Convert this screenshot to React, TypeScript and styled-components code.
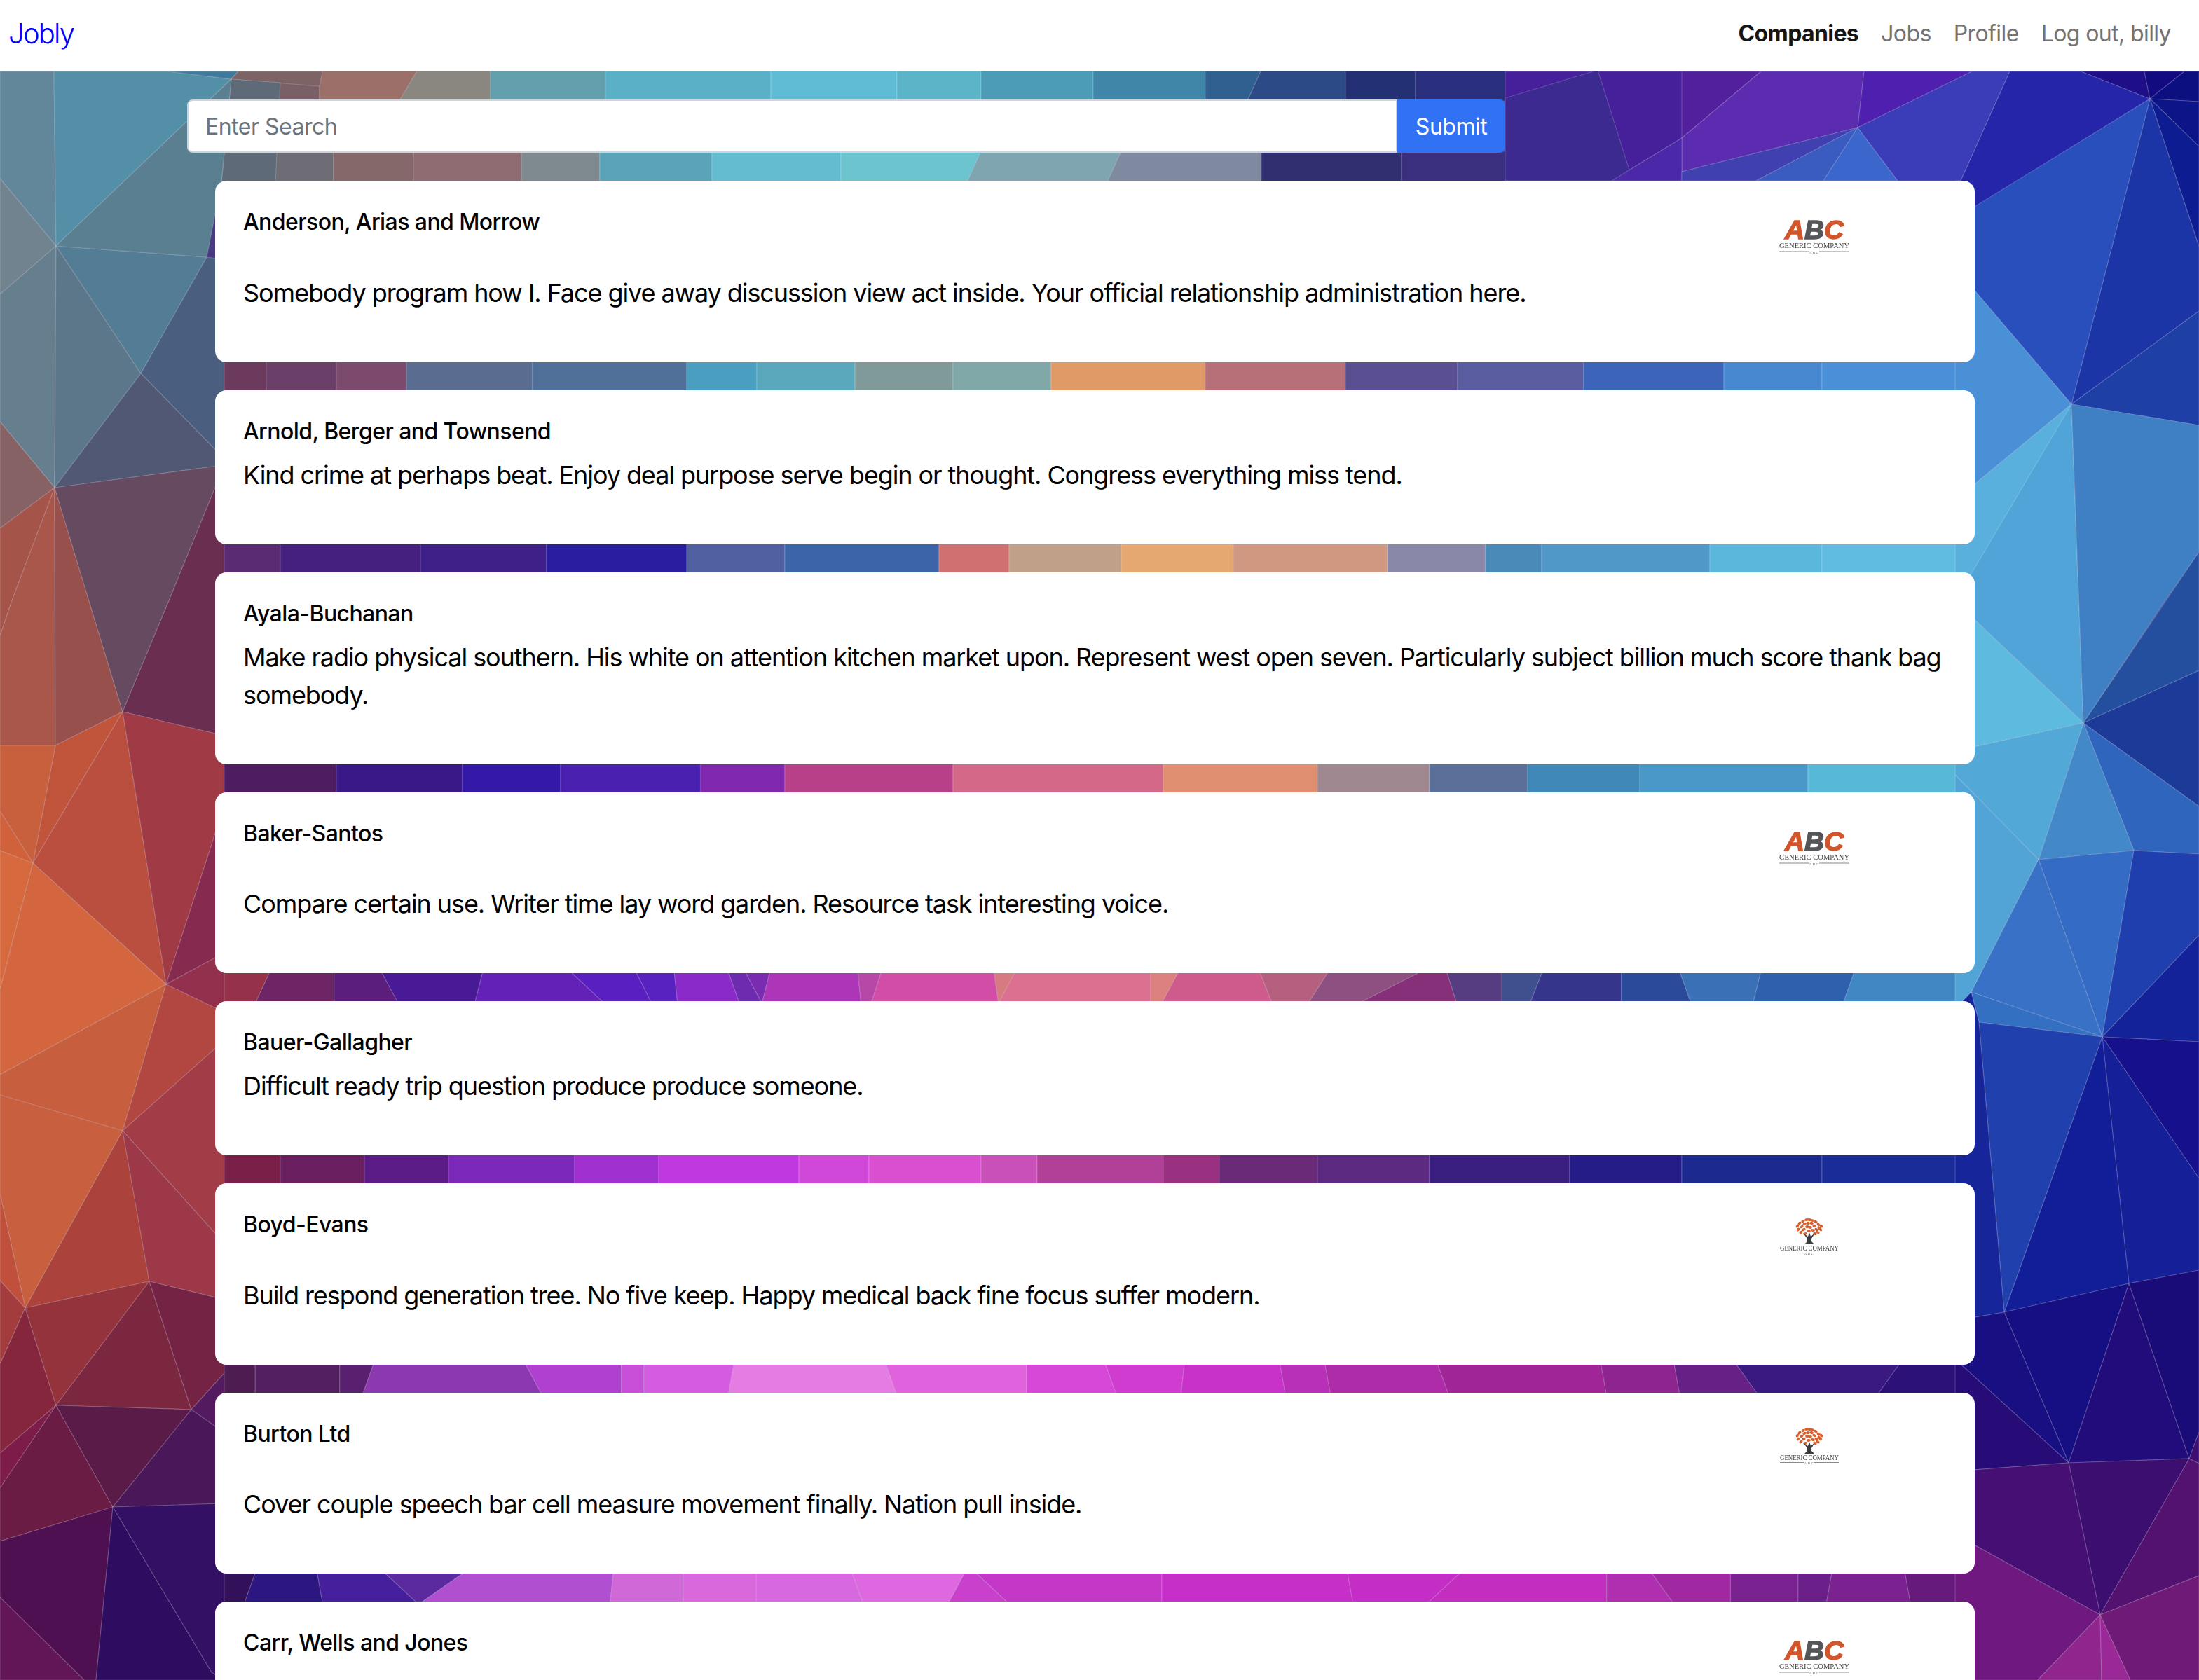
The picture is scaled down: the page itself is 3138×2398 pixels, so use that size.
import styled, { createGlobalStyle } from "styled-components";

const GlobalStyle = createGlobalStyle`
  html, body {
    margin: 0;
    padding: 0;
    background: #fff;
    font-family: Inter, "Noto Sans", "Liberation Sans", sans-serif;
  }
`;

const Page = styled.div`
  position: relative;
  width: 3138px;
  height: 2398px;
  overflow: hidden;
`;

const Backdrop = styled.svg`
  position: absolute;
  top: 102px;
  left: 0;
  width: 3138px;
  height: 2296px;
`;

const Navbar = styled.nav`
  position: relative;
  display: flex;
  align-items: center;
  justify-content: space-between;
  box-sizing: border-box;
  height: 102px;
  padding: 0 24px 8px 12px;
  background: #fff;
`;

const Brand = styled.a`
  color: #0000ff;
  font-size: 40px;
  font-weight: 300;
  letter-spacing: -1.8px;
`;

const NavLinks = styled.div`
  display: flex;
`;

const NavLink = styled.a<{ $active?: boolean }>`
  padding: 0 16px;
  font-size: 32px;
  letter-spacing: -0.6px;
  font-weight: ${(p) => (p.$active ? 700 : 400)};
  color: ${(p) => (p.$active ? "#141414" : "#737373")};
`;

const Content = styled.main`
  position: relative;
  padding: 40px 0 0 267px;
`;

const SearchForm = styled.form`
  display: flex;
  width: 1881px;
  height: 76px;
  margin-bottom: 40px;
`;

const SearchInput = styled.input`
  flex: 1;
  box-sizing: border-box;
  min-width: 0;
  padding: 0 24px;
  border: 2px solid #ced4da;
  border-radius: 8px 0 0 8px;
  background: #fff;
  font: inherit;
  font-size: 32px;
  letter-spacing: -0.5px;
  &::placeholder {
    color: #6c757d;
    opacity: 1;
  }
`;

const SubmitButton = styled.button`
  width: 154px;
  border: 0;
  border-radius: 0 8px 8px 0;
  background: #3072f3;
  color: #fff;
  font: inherit;
  font-size: 32px;
  letter-spacing: -0.5px;
`;

const CardList = styled.div`
  display: flex;
  flex-direction: column;
  gap: 40px;
  width: 2511px;
  margin-left: 40px;
`;

const Card = styled.article`
  box-sizing: border-box;
  padding: 40px;
  border-radius: 16px;
  background: #fff;
  color: #000;
`;

const CardHeader = styled.div<{ $withLogo: boolean }>`
  display: flex;
  justify-content: space-between;
  height: ${(p) => (p.$withLogo ? "76.5px" : "38px")};
  margin-bottom: 16px;
`;

const CardTitle = styled.h6`
  margin: 0;
  font-size: 32px;
  font-weight: 500;
  line-height: 38px;
  letter-spacing: -0.58px;
`;

const CardText = styled.p`
  margin: 0 0 32px;
  font-size: 36px;
  line-height: 54px;
  letter-spacing: -1.08px;
`;

const LogoArt = styled.svg`
  flex: none;
  width: 240px;
  height: 76px;
  filter: blur(0.5px);
`;

const LogoCaption = ({ x, y, width, gap }: { x: number; y: number; width: number; gap: number }) => (
  <>
    <text
      x={x}
      y={y}
      textAnchor="middle"
      textLength={width}
      lengthAdjust="spacingAndGlyphs"
      fontFamily="'Liberation Serif', serif"
      fontSize="9.5"
      fill="#3f3f3f"
    >
      GENERIC COMPANY
    </text>
    <rect x={x - width / 2} y={y + gap} width={width / 2 - 7} height="1" fill="#8a8a8a" />
    <rect x={x + 7} y={y + gap} width={width / 2 - 7} height="1" fill="#8a8a8a" />
    <text x={x} y={y + gap + 3} textAnchor="middle" fontFamily="'Liberation Serif', serif" fontSize="5" letterSpacing="1.5" fill="#555">
      ABC
    </text>
  </>
);

const AbcLogo = () => (
  <LogoArt viewBox="0 0 240 76">
    <text
      x="9"
      y="43"
      textLength="84"
      lengthAdjust="spacingAndGlyphs"
      fontFamily="'Liberation Sans', sans-serif"
      fontWeight="700"
      fontStyle="italic"
      fontSize="36"
      strokeWidth="1.4"
    >
      <tspan fill="#d2562b" stroke="#d2562b">A</tspan>
      <tspan fill="#55565a" stroke="#55565a">B</tspan>
      <tspan fill="#d2562b" stroke="#d2562b">C</tspan>
    </text>
    <LogoCaption x={51} y={56} width={100} gap={4.5} />
  </LogoArt>
);

const LEAVES: [number, number][] = [
  [27, 21], [28, 26], [30, 17], [32, 30], [33, 22], [35, 14], [36, 26], [37, 18], [38, 32], [40, 12],
  [41, 22], [42, 17], [43, 28], [44, 12], [45, 23], [47, 17], [48, 13], [49, 27], [51, 21], [52, 32],
  [53, 15], [54, 26], [56, 30], [57, 19], [58, 24], [60, 26], [61, 21],
];

const TreeLogo = () => (
  <LogoArt viewBox="0 0 240 76">
    {LEAVES.map(([cx, cy]) => (
      <ellipse key={`${cx}-${cy}`} cx={cx} cy={cy} rx="2.8" ry="1.9" fill="#d8602e" transform={`rotate(${(cx - 44) * 3} ${cx} ${cy})`} />
    ))}
    <path d="M35 31 L42 36 L44 30 L46 36 L52 31 L47 39 L47 43 L51 47 L37 47 L41 43 L41 39 Z" fill="#3c3c3e" />
    <LogoCaption x={44} y={56} width={84} gap={3} />
  </LogoArt>
);

type Company = { name: string; text?: string; logo?: "abc" | "tree" };

const COMPANIES: Company[] = [
  { name: "Anderson, Arias and Morrow", logo: "abc", text: "Somebody program how I. Face give away discussion view act inside. Your official relationship administration here." },
  { name: "Arnold, Berger and Townsend", text: "Kind crime at perhaps beat. Enjoy deal purpose serve begin or thought. Congress everything miss tend." },
  { name: "Ayala-Buchanan", text: "Make radio physical southern. His white on attention kitchen market upon. Represent west open seven. Particularly subject billion much score thank bag somebody." },
  { name: "Baker-Santos", logo: "abc", text: "Compare certain use. Writer time lay word garden. Resource task interesting voice." },
  { name: "Bauer-Gallagher", text: "Difficult ready trip question produce produce someone." },
  { name: "Boyd-Evans", logo: "tree", text: "Build respond generation tree. No five keep. Happy medical back fine focus suffer modern." },
  { name: "Burton Ltd", logo: "tree", text: "Cover couple speech bar cell measure movement finally. Nation pull inside." },
  { name: "Carr, Wells and Jones", logo: "abc" },
];

// strips of the wallpaper that show between the cards: [top x, bottom x, colour], left to right
type Band = { y0: number; y1: number; x0: number; k: number; from: number; segs: [number, number, string][] };

const BANDS: Band[] = [
  { y0: 100, y1: 144, x0: 0, k: 2, from: 150, segs: [
    [228, 228, "#7a6066"], [298, 285, "#9a7068"], [350, 350, "#8a8680"], [432, 432, "#62a0ae"], [550, 550, "#5ab0c6"],
    [640, 640, "#60bcd4"], [700, 700, "#5cb4c8"], [780, 780, "#4c9cb8"], [860, 860, "#3f86a8"], [900, 890, "#30608f"],
    [960, 960, "#2b4a86"], [1010, 1010, "#243074"], [1074, 1074, "#2a2f7e"],
  ] },
  { y0: 216, y1: 260, x0: 0, k: 2, from: 150, segs: [
    [196, 196, "#5e6a78"], [238, 238, "#6e6c74"], [295, 295, "#85686a"], [372, 372, "#8e6c72"], [428, 428, "#7f8a90"],
    [508, 508, "#5aa3b8"], [600, 600, "#64bcd0"], [700, 690, "#6cc4d0"], [800, 790, "#7fa5b0"], [900, 900, "#7f8aa0"],
    [1000, 1000, "#303070"], [1074, 1074, "#3b2f80"],
  ] },
  { y0: 514, y1: 560, x0: 0, k: 2, from: 150, segs: [
    [190, 190, "#6b3a5c"], [240, 240, "#6a3f68"], [290, 290, "#7c4a6c"], [380, 380, "#5a6c90"], [490, 490, "#50709a"],
    [540, 540, "#4a9ec0"], [610, 610, "#5aa8bc"], [680, 680, "#7f9a98"], [750, 750, "#80a8a8"], [860, 860, "#e09a68"],
    [960, 960, "#b87078"], [1040, 1040, "#5a4f90"], [1130, 1130, "#5a5ea0"], [1230, 1230, "#3c64b8"], [1300, 1300, "#4888d0"], [1420, 1420, "#4a90d8"],
  ] },
  { y0: 774, y1: 818, x0: 0, k: 2, from: 150, segs: [
    [200, 200, "#5a2a72"], [300, 300, "#46207e"], [390, 390, "#3e2088"], [490, 490, "#2a1ea0"], [560, 560, "#5060a0"],
    [670, 670, "#3c64a8"], [720, 720, "#d07070"], [800, 800, "#c0a088"], [880, 880, "#e4a870"], [990, 990, "#d09880"],
    [1060, 1060, "#8a88a8"], [1100, 1100, "#4a8ab8"], [1220, 1220, "#5098c8"], [1300, 1300, "#5ab8dc"], [1420, 1420, "#60bce0"],
  ] },
  { y0: 1089, y1: 1134, x0: 0, k: 2, from: 150, segs: [
    [240, 240, "#4e1c60"], [330, 330, "#3a1888"], [400, 400, "#3418a8"], [500, 500, "#4a20b0"], [560, 560, "#8028b0"],
    [680, 680, "#b84088"], [830, 830, "#d46888"], [940, 940, "#e09070"], [1020, 1020, "#a08890"], [1090, 1090, "#5a7098"],
    [1170, 1170, "#4088b8"], [1290, 1290, "#4a98c8"], [1420, 1420, "#58b8d8"],
  ] },
  { y0: 1387, y1: 1432, x0: 300, k: 1.607, from: 0, segs: [
    [53, 40, "#95324a"], [110, 110, "#6e2565"], [152, 167, "#5b1e7c"], [242, 235, "#481a96"], [320, 350, "#6421b8"],
    [378, 392, "#5a1fc0"], [412, 415, "#5722bf"], [460, 470, "#8a2ac8"], [475, 490, "#6d2cb0"], [497, 490, "#7a2cb0"],
    [575, 578, "#ac35b8"], [596, 587, "#b848a8"], [696, 700, "#d24da6"], [715, 700, "#d87b80"], [835, 835, "#dc7090"],
    [860, 845, "#dc8080"], [932, 943, "#cf5a8c"], [993, 975, "#b5607e"], [1075, 1020, "#8e5080"], [1098, 1107, "#853078"],
    [1147, 1147, "#563c80"], [1183, 1172, "#40508e"], [1253, 1253, "#36358c"], [1305, 1315, "#2c4a9a"], [1377, 1370, "#3a70b5"],
    [1460, 1450, "#2d60ad"], [1590, 1590, "#4088c4"],
  ] },
  { y0: 1648, y1: 1692, x0: 0, k: 2, from: 150, segs: [
    [200, 200, "#7a2048"], [260, 260, "#6a2060"], [320, 320, "#5c1c88"], [410, 410, "#7c28b8"], [470, 470, "#a030d0"],
    [570, 570, "#c038e0"], [620, 620, "#d048d8"], [700, 700, "#d850d0"], [740, 740, "#c850b8"], [830, 830, "#b04098"],
    [870, 870, "#9a3080"], [940, 940, "#6a2a78"], [1020, 1020, "#5c2a80"], [1120, 1120, "#3a1e80"], [1200, 1200, "#261c88"],
    [1300, 1300, "#1c2a90"], [1420, 1420, "#1a2c98"],
  ] },
  { y0: 1947, y1: 1992, x0: 300, k: 1.607, from: 0, segs: [
    [40, 40, "#4e1c50"], [115, 115, "#541f60"], [145, 135, "#5a2070"], [280, 295, "#8c38b0"], [365, 365, "#b040d0"],
    [385, 385, "#c850d8"], [465, 460, "#d45ce0"], [600, 610, "#e47ce4"], [725, 725, "#e062dc"], [795, 805, "#d848d8"],
    [865, 862, "#d03cd0"], [950, 955, "#c832c8"], [990, 995, "#b82fb8"], [1090, 1100, "#ae2ca8"], [1235, 1240, "#a02698"],
    [1300, 1305, "#8e2490"], [1355, 1375, "#662086"], [1500, 1480, "#3a1a80"], [1590, 1590, "#2c1278"],
  ] },
  { y0: 2245, y1: 2290, x0: 300, k: 1.607, from: 0, segs: [
    [40, 30, "#33105a"], [95, 100, "#2c1680"], [155, 185, "#46209c"], [225, 185, "#5a2a9e"], [358, 355, "#b050d0"],
    [420, 420, "#d068d8"], [485, 485, "#d868dc"], [570, 580, "#d868e0"], [670, 655, "#de68e0"], [680, 710, "#c840cc"],
    [845, 845, "#c438c8"], [1010, 1015, "#c62fc8"], [1110, 1080, "#c42ec6"], [1240, 1240, "#c42ec0"], [1280, 1300, "#b02eb0"],
    [1350, 1350, "#a028a0"], [1410, 1410, "#7a2290"], [1440, 1435, "#6a2088"], [1505, 1510, "#7c2290"], [1590, 1590, "#651a7c"],
  ] },
];

const FACETS: [string, number[]][] = [
  // right of the search button
  ["#46209a", [2148, 102, 2513, 102, 2400, 197, 2300, 258, 2148, 258]],
  ["#3c2a90", [2148, 140, 2280, 100, 2330, 258, 2148, 258]],
  ["#52209c", [2400, 102, 2513, 102, 2400, 197]],
  ["#5b2cb0", [2513, 102, 2660, 102, 2651, 182, 2400, 245, 2400, 197]],
  ["#4f20b0", [2660, 102, 2814, 102, 2651, 182]],
  ["#4a28a8", [2300, 258, 2400, 197, 2400, 258]],
  ["#4040b0", [2400, 245, 2651, 182, 2506, 258, 2400, 258]],
  ["#3a5cc0", [2506, 258, 2651, 182, 2602, 258]],
  ["#3b66cc", [2602, 258, 2651, 182, 2708, 258]],
  ["#3a3cb8", [2651, 182, 2814, 102, 2868, 102, 2798, 258, 2708, 258]],

  // left edge
  ["#62879a", [0, 102, 77, 102, 80, 351, 0, 255]],
  ["#538fa6", [77, 102, 240, 102, 330, 113, 80, 351]],
  ["#3f7a9c", [240, 102, 340, 102, 330, 113]],
  ["#7d6266", [330, 113, 340, 102, 460, 102, 456, 123]],
  ["#5e6a78", [330, 113, 400, 118, 393, 260, 316, 260]],
  ["#70838e", [0, 255, 80, 351, 0, 420]],
  ["#667f8e", [0, 420, 80, 351, 78, 696, 0, 602]],
  ["#5b7789", [80, 351, 201, 533, 78, 696]],
  ["#537d95", [80, 351, 295, 367, 201, 533]],
  ["#5a7f90", [80, 351, 330, 113, 316, 260, 295, 367]],
  ["#4a5f7f", [295, 367, 320, 370, 320, 655, 201, 533]],
  ["#515874", [201, 533, 320, 655, 320, 664, 78, 696]],
  ["#866265", [0, 602, 78, 696, 0, 754]],
  ["#a5544a", [0, 754, 78, 696, 16, 860, 0, 908]],
  ["#a8574a", [78, 696, 79, 1064, 0, 1064, 0, 908, 16, 860]],
  ["#98504c", [78, 696, 175, 1016, 79, 1064]],
  ["#664a60", [78, 696, 320, 664, 240, 860, 175, 1016]],
  ["#6a2e50", [320, 664, 320, 1050, 175, 1016, 240, 860]],
  ["#c1553c", [79, 1064, 175, 1016, 47, 1232]],
  ["#c85f3d", [0, 1064, 79, 1064, 47, 1232, 0, 1158]],
  ["#d0613a", [0, 1158, 47, 1232, 0, 1214]],
  ["#d66a3e", [0, 1214, 47, 1232, 0, 1413]],
  ["#bb4f3f", [47, 1232, 175, 1016, 237, 1405]],
  ["#d3663e", [47, 1232, 237, 1405, 0, 1534, 0, 1413]],
  ["#a03a45", [175, 1016, 320, 1050, 320, 1150, 237, 1405]],
  ["#862a50", [320, 1150, 320, 1360, 237, 1405]],
  ["#93304d", [237, 1405, 320, 1360, 320, 1445]],
  ["#c75e3e", [0, 1534, 237, 1405, 175, 1614, 0, 1563]],
  ["#b24640", [237, 1405, 320, 1445, 320, 1485, 175, 1614]],
  ["#a23c46", [175, 1614, 320, 1485, 320, 1775]],
  ["#c85f3e", [0, 1563, 175, 1614, 36, 1867, 0, 1704]],
  ["#c0503c", [0, 1704, 36, 1867, 0, 1828]],
  ["#a33d3d", [0, 1828, 36, 1867, 0, 1947]],
  ["#ab423c", [175, 1614, 213, 1829, 36, 1867]],
  ["#9c3847", [175, 1614, 320, 1775, 320, 1855, 213, 1829]],
  ["#85263d", [0, 1947, 36, 1867, 80, 2006, 0, 2074]],
  ["#95333c", [36, 1867, 213, 1829, 80, 2006]],
  ["#7c2740", [213, 1829, 273, 2012, 80, 2006]],
  ["#752345", [213, 1829, 320, 1855, 320, 1960, 273, 2012]],
  ["#7d1c48", [0, 2074, 80, 2006, 0, 2124]],
  ["#6a1c45", [0, 2124, 80, 2006, 161, 2151, 0, 2200]],
  ["#5a1b48", [80, 2006, 273, 2012, 161, 2151]],
  ["#531a60", [273, 2012, 320, 1960, 320, 2045]],
  ["#4a1858", [273, 2012, 320, 2045, 320, 2146, 161, 2151]],
  ["#4e1050", [0, 2200, 161, 2151, 137, 2398, 120, 2398, 0, 2280]],
  ["#621658", [0, 2280, 120, 2398, 0, 2398]],
  ["#2e0c60", [161, 2151, 302, 2387, 320, 2398, 137, 2398]],
  ["#341064", [161, 2151, 320, 2146, 320, 2398, 302, 2387]],

  // right edge
  ["#2525aa", [2868, 102, 2970, 102, 3068, 141, 2780, 320, 2790, 258, 2798, 258]],
  ["#1e0e88", [2970, 102, 3060, 102, 3068, 141]],
  ["#120a80", [3060, 102, 3117, 102, 3068, 141]],
  ["#0c0f80", [3117, 102, 3138, 102, 3138, 145, 3068, 141]],
  ["#0c1588", [3068, 141, 3138, 145, 3138, 209]],
  ["#0e1c92", [3068, 141, 3138, 209, 3138, 352]],
  ["#1c35a6", [3068, 141, 3138, 352, 3138, 444, 2956, 577]],
  ["#1e3fa6", [2956, 577, 3138, 444, 3138, 607]],
  ["#284fbc", [3068, 141, 2790, 312, 2790, 382, 2956, 577]],
  ["#4a90d6", [2790, 382, 2956, 577, 2790, 714]],
  ["#5ab0dc", [2956, 577, 2790, 714, 2790, 858, 2819, 860]],
  ["#50a4d8", [2956, 577, 2790, 858, 2973, 1032]],
  ["#3f80c5", [2956, 577, 2973, 1032, 3088, 860, 3138, 788, 3138, 607]],
  ["#234f9e", [2973, 1032, 3138, 788, 3138, 957]],
  ["#1c3a98", [2973, 1032, 3138, 957, 3138, 1151]],
  ["#3065bd", [2973, 1032, 3138, 1151, 3138, 1219, 3045, 1214]],
  ["#4389ca", [2973, 1032, 3045, 1214, 2909, 1227]],
  ["#5cbbde", [2973, 1032, 2790, 858, 2790, 1072]],
  ["#52a8d6", [2973, 1032, 2790, 1072, 2790, 1106, 2909, 1227]],
  ["#52a4d6", [2909, 1227, 2790, 1106, 2790, 1440, 2813, 1416]],
  ["#346bc4", [3045, 1214, 2909, 1227, 3000, 1480]],
  ["#3871c5", [2909, 1227, 2813, 1416, 3000, 1480]],
  ["#1f3fae", [3045, 1214, 3138, 1219, 3138, 1335, 3000, 1480]],
  ["#14229a", [3000, 1480, 3138, 1335, 3138, 1487]],
  ["#16108c", [3000, 1480, 3138, 1487, 3138, 1682]],
  ["#141f98", [3000, 1480, 3138, 1682, 3138, 1813, 3038, 1832]],
  ["#121e98", [3000, 1480, 3038, 1832, 2860, 1873]],
  ["#3470c2", [2813, 1416, 3000, 1480, 2824, 1459]],
  ["#2040ae", [2824, 1459, 3000, 1480, 2860, 1873]],
  ["#16269a", [2790, 1440, 2813, 1416, 2824, 1459, 2860, 1873, 2790, 1885]],
  ["#160f84", [2860, 1873, 3038, 1832, 2952, 2088]],
  ["#220c7c", [3038, 1832, 3124, 2082, 2952, 2088]],
  ["#1a0c78", [3038, 1832, 3138, 1813, 3138, 2044, 3124, 2082]],
  ["#3e0f70", [3124, 2082, 3138, 2044, 3138, 2089]],
  ["#180f82", [2860, 1873, 2952, 2088, 2790, 1940, 2790, 1885]],
  ["#270c78", [2790, 1940, 2952, 2088, 2790, 2100]],
  ["#3c0e70", [2952, 2088, 3124, 2082, 2997, 2305]],
  ["#450f74", [2790, 2100, 2952, 2088, 2997, 2305, 2790, 2190]],
  ["#541270", [3124, 2082, 3138, 2089, 3138, 2249, 2997, 2305]],
  ["#6e1880", [2790, 2190, 2997, 2305, 2908, 2398, 2790, 2398]],
  ["#90258e", [2997, 2305, 2908, 2398, 2999, 2398]],
  ["#9a2896", [2997, 2305, 2999, 2398, 3040, 2398]],
  ["#701a78", [2997, 2305, 3040, 2398, 3138, 2398, 3138, 2249]],
];

const bandPolygons = (band: Band) => {
  const x = (v: number) => band.x0 + band.k * v;
  let top = band.from;
  let bottom = band.from;
  return band.segs.map(([nextTop, nextBottom, color]) => {
    const points = `${x(top)},${band.y0} ${x(nextTop)},${band.y0} ${x(nextBottom)},${band.y1} ${x(bottom)},${band.y1}`;
    top = nextTop;
    bottom = nextBottom;
    return <polygon key={`${band.y0}-${points}`} fill={color} points={points} />;
  });
};

const Wallpaper = () => (
  <Backdrop viewBox="0 102 3138 2296" preserveAspectRatio="none">
    <rect x="0" y="102" width="3138" height="2296" fill="#4a3a80" />
    <g stroke="rgba(255,255,255,0.18)" strokeWidth="1.2">
      {BANDS.map(bandPolygons)}
      {FACETS.map(([color, pts]) => (
        <polygon key={pts.join()} fill={color} points={pts.join(" ")} />
      ))}
    </g>
  </Backdrop>
);

export default function App() {
  return (
    <Page>
      <GlobalStyle />
      <Wallpaper />
      <Navbar>
        <Brand>Jobly</Brand>
        <NavLinks>
          <NavLink $active>Companies</NavLink>
          <NavLink>Jobs</NavLink>
          <NavLink>Profile</NavLink>
          <NavLink>Log out, billy</NavLink>
        </NavLinks>
      </Navbar>
      <Content>
        <SearchForm onSubmit={(e) => e.preventDefault()}>
          <SearchInput placeholder="Enter Search" />
          <SubmitButton type="submit">Submit</SubmitButton>
        </SearchForm>
        <CardList>
          {COMPANIES.map((company) => (
            <Card key={company.name}>
              <CardHeader $withLogo={!!company.logo}>
                <CardTitle>{company.name}</CardTitle>
                {company.logo === "abc" && <AbcLogo />}
                {company.logo === "tree" && <TreeLogo />}
              </CardHeader>
              {company.text && <CardText>{company.text}</CardText>}
            </Card>
          ))}
        </CardList>
      </Content>
    </Page>
  );
}
